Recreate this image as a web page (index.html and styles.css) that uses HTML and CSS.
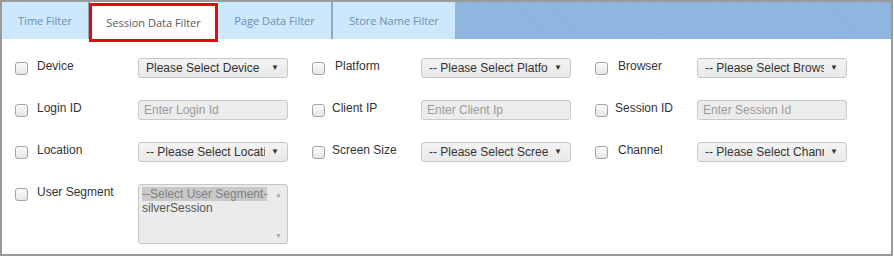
FILE: index.html
```html
<!DOCTYPE html>
<html>
<head>
<meta charset="utf-8">
<link rel="stylesheet" href="styles.css">
</head>
<body>
<div class="panel">
  <div class="tabs">
    <div class="tab tab--first">Time Filter</div>
    <div class="tab tab--active">Session Data Filter</div>
    <div class="tab tab--page">Page Data Filter</div>
    <div class="tab tab--store">Store Name Filter</div>
    <div class="tabs__fill"></div>
  </div>
  <div class="form">
    <span class="cb"></span><span class="label">Device</span>
    <div class="select"><span class="select__text">Please Select Device</span><span class="select__arrow">▼</span></div>
    <span class="cb"></span><span class="label label--indent">Platform</span>
    <div class="select"><span class="select__text">-- Please Select Platform</span><span class="select__arrow">▼</span></div>
    <span class="cb"></span><span class="label label--indent">Browser</span>
    <div class="select"><span class="select__text">-- Please Select Browser</span><span class="select__arrow">▼</span></div>

    <span class="cb"></span><span class="label">Login ID</span>
    <div class="input">Enter Login Id</div>
    <span class="cb"></span><span class="label">Client IP</span>
    <div class="input">Enter Client Ip</div>
    <span class="cb"></span><span class="label">Session ID</span>
    <div class="input">Enter Session Id</div>

    <span class="cb"></span><span class="label">Location</span>
    <div class="select"><span class="select__text">-- Please Select Location</span><span class="select__arrow">▼</span></div>
    <span class="cb"></span><span class="label">Screen Size</span>
    <div class="select"><span class="select__text">-- Please Select Screen Size</span><span class="select__arrow">▼</span></div>
    <span class="cb"></span><span class="label label--indent">Channel</span>
    <div class="select"><span class="select__text">-- Please Select Channel</span><span class="select__arrow">▼</span></div>

    <span class="cb"></span><span class="label">User Segment</span>
    <div class="listbox">
      <div class="listbox__options">
        <div class="option option--selected">--Select User Segment-</div>
        <div class="option">silverSession</div>
      </div>
      <div class="listbox__scroll"><span>▲</span><span>▼</span></div>
    </div>
  </div>
</div>
</body>
</html>
```
FILE: styles.css
```css
html, body { margin: 0; padding: 0; background: #fff; }
.panel {
  width: 893px;
  height: 256px;
  box-sizing: border-box;
  border: 2px solid #9a9a9a;
  border-right-width: 2px;
  font-family: "Liberation Sans", Arial, sans-serif;
}
.tabs {
  display: flex;
  align-items: flex-start;
  height: 37px;
  position: relative;
  z-index: 2;
}
.tab {
  height: 37px;
  box-sizing: border-box;
  display: flex;
  align-items: center;
  justify-content: center;
  background: #cde8fc;
  font-family: "Open Sans", sans-serif;
  font-size: 11px;
  color: #6b8db4;
}
.tab--first { width: 88px; border-right: 2px solid #90a9c6; }
.tab--active {
  width: 129px;
  height: 39px;
  margin-top: 1px;
  margin-left: -1px;
  border: 3px solid #e8070b;
  background: #fff;
  color: #5a5a5a;
}
.tab--page { width: 113px; border-right: 2px solid #90a9c6; width: 115px; }
.tab--store { width: 122px; }
.tabs__fill {
  flex: 1;
  height: 37px;
  background-color: #8db4de;
  background-image: repeating-linear-gradient(45deg, rgba(255,255,255,0.06) 0 1px, transparent 1px 3px);
}
.form {
  display: grid;
  grid-template-columns: 22px 101px 174px 20px 89px 174px 20px 82px 150px;
  grid-template-rows: 20px 20px 20px 60px;
  row-gap: 22px;
  padding: 19px 0 0 13px;
  font-size: 12px;
  color: #333;
}
.cb {
  width: 13px;
  height: 13px;
  box-sizing: border-box;
  margin-top: 4px;
  border: 1px solid #a4a4a4;
  border-radius: 3px;
  background: linear-gradient(#fbfbfb, #e6e6e6);
}
.label {
  line-height: 14px;
  padding-top: 1px;
  white-space: nowrap;
}
.label--indent { padding-left: 3px; }
.select {
  width: 150px;
  height: 20px;
  box-sizing: border-box;
  border: 1px solid #c6c6c6;
  border-radius: 3px;
  background: linear-gradient(#f3f3f3, #e9e9e9);
  display: flex;
  align-items: center;
  padding: 0 8px 0 7px;
  gap: 6px;
}
.select__text {
  flex: 1;
  overflow: hidden;
  white-space: nowrap;
  line-height: 14px;
}
.select__arrow {
  font-size: 8px;
  color: #333;
  line-height: 8px;
}
.input {
  width: 150px;
  height: 20px;
  box-sizing: border-box;
  border: 1px solid #cacaca;
  border-radius: 3px;
  background: #ececec;
  color: #9a9a9a;
  padding: 0 5px;
  line-height: 18px;
}
.listbox {
  width: 150px;
  height: 60px;
  box-sizing: border-box;
  border: 1px solid #c6c6c6;
  border-radius: 3px;
  background: #ebebeb;
  display: flex;
}
.listbox__options {
  flex: 1;
  padding: 2px 0 0 3px;
  overflow: hidden;
}
.option {
  line-height: 14px;
  white-space: nowrap;
  color: #555;
}
.option--selected {
  background: #c9c9c9;
  color: #808080;
  width: 125px;
}
.listbox__scroll {
  width: 17px;
  display: flex;
  flex-direction: column;
  justify-content: space-between;
  align-items: center;
  padding: 6px 0 4px;
  font-size: 7px;
  color: #a8a8a8;
}
```
